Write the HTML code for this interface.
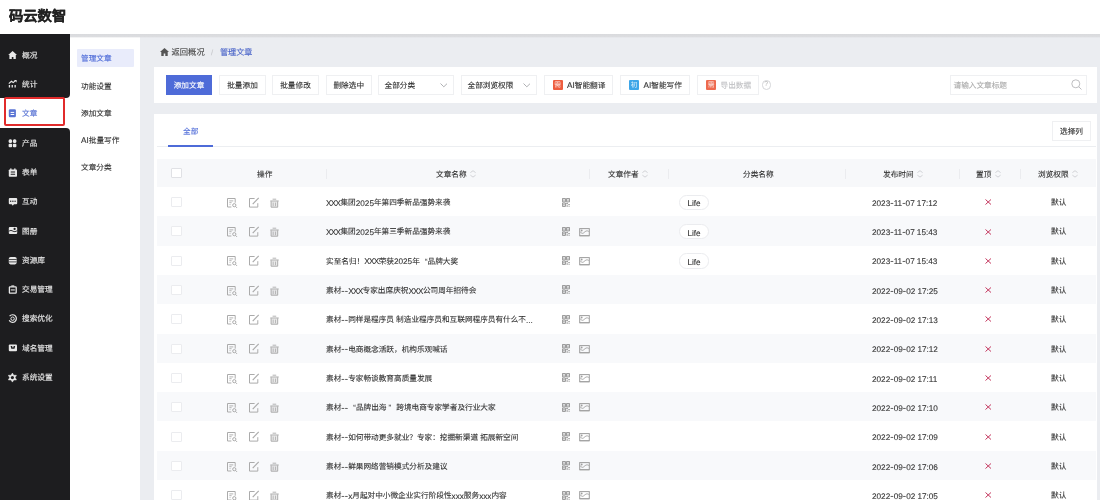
<!DOCTYPE html>
<html lang="zh-CN"><head><meta charset="utf-8"><style>
*{box-sizing:border-box;margin:0;padding:0}
html,body{width:1100px;height:500px;overflow:hidden;background:#fff;font-family:"Liberation Sans",sans-serif;color:#333;text-rendering:geometricPrecision}
#root{position:absolute;left:0;top:0;width:1100px;height:500px;will-change:transform}
.a{position:absolute}
.t{position:absolute;font-size:7.65px;line-height:12px;white-space:nowrap;color:#333;-webkit-text-stroke:0.1px}
.L{font-size:8.2px;position:relative;top:0.7px}
.X{letter-spacing:-0.65px}
.D{font-size:10px;letter-spacing:0.1px}
.Q{display:inline-block;width:5.6px;text-align:right}
.Q2{display:inline-block;width:5.6px;text-align:left}
.btn{position:absolute;height:19.5px;border:1px solid #eff0f2;background:#fff}
.cb{position:absolute;width:11px;height:10px;border:1px solid #e0e1e5;background:#fff;border-radius:1px}
.sep{position:absolute;width:1px;height:10px;background:#ebecef;top:168.5px}
.stripe{position:absolute;left:157px;width:939px;background:#f8f9fb}
.tag{position:absolute;height:15.5px;border:1px solid #ebecef;border-radius:7.5px;background:#fff}
</style></head><body><div id="root">
<div class="a" style="left:0;top:0;width:1100px;height:34px;background:#fff"></div>
<div class="t" style="left:9px;top:7.1px;font-size:14.3px;line-height:20px;font-weight:bold;color:#222;-webkit-text-stroke:0.25px">码云数智</div>
<div class="a" style="left:0;top:34px;width:70px;height:64px;background:#1d1d1f;border-bottom-right-radius:4px"></div>
<div class="a" style="left:0;top:128px;width:70px;height:372px;background:#1d1d1f;border-top-right-radius:4px"></div>
<svg class="a" style="left:8px;top:50.80px" width="10" height="10" viewBox="0 0 10 10" overflow="visible"><path d="M4.6 0.1L0.2 4.1h1.2v3.8h2.4V6.1h1.6v1.8h2.4V4.1H9z" fill="#e8e8e8"/></svg>
<div class="t" style="left:22px;top:50.00px;color:#e4e4e4;-webkit-text-stroke:0.15px">概况</div>
<svg class="a" style="left:8px;top:80.06px" width="10" height="10" viewBox="0 0 10 10" overflow="visible"><path d="M0.8 7.5V5.1h1.3v2.4zM3.6 7.5V5.1h1.3v2.4zM6.5 7.5V5.1h1.3v2.4z" fill="#e8e8e8"/><path d="M0.8 3.6L3.4 1.3 5.2 2.6 7.2 0.9" stroke="#e8e8e8" stroke-width="1.2" fill="none"/><path d="M5.9 -0.1h2.7v2.7z" fill="#e8e8e8"/></svg>
<div class="t" style="left:22px;top:79.26px;color:#e4e4e4;-webkit-text-stroke:0.15px">统计</div>
<svg class="a" style="left:8px;top:109.10px" width="10" height="10" viewBox="0 0 10 10" overflow="visible"><rect x="0.8" y="0.2" width="7.1" height="8.1" rx="1.2" fill="#5a74d4"/><rect x="2.6" y="2.9" width="3.6" height="1" fill="#fff"/><rect x="2.6" y="5" width="3.6" height="1" fill="#fff"/></svg>
<div class="t" style="left:22px;top:108.30px;color:#5a74d4;-webkit-text-stroke:0.15px">文章</div>
<svg class="a" style="left:8px;top:138.58px" width="10" height="10" viewBox="0 0 10 10" overflow="visible"><rect x="0.6" y="0.3" width="3.5" height="3.6" rx="1.5" fill="#e8e8e8"/><rect x="4.9" y="0.3" width="3.5" height="3.6" rx="1.5" fill="#e8e8e8"/><rect x="0.6" y="4.7" width="3.5" height="3.6" rx="1" fill="#e8e8e8"/><rect x="4.9" y="4.7" width="3.5" height="3.6" rx="1" fill="#e8e8e8"/></svg>
<div class="t" style="left:22px;top:137.78px;color:#e4e4e4;-webkit-text-stroke:0.15px">产品</div>
<svg class="a" style="left:8px;top:167.84px" width="10" height="10" viewBox="0 0 10 10" overflow="visible"><rect x="0.8" y="1.4" width="8.2" height="7.3" rx="0.8" fill="#e8e8e8"/><rect x="2.2" y="0.4" width="1.3" height="1.6" fill="#e8e8e8"/><rect x="6.2" y="0.4" width="1.3" height="1.6" fill="#e8e8e8"/><rect x="2.6" y="3.5" width="4.6" height="1" rx="0.4" fill="#1d1d1f"/><rect x="2.6" y="5.7" width="4.6" height="1" rx="0.4" fill="#1d1d1f"/></svg>
<div class="t" style="left:22px;top:167.04px;color:#e4e4e4;-webkit-text-stroke:0.15px">表单</div>
<svg class="a" style="left:8px;top:197.10px" width="10" height="10" viewBox="0 0 10 10" overflow="visible"><rect x="0.8" y="1.1" width="8.4" height="6.2" rx="1" fill="#e8e8e8"/><path d="M3.6 7.1h2.4L4.8 8.8z" fill="#e8e8e8"/><circle cx="2.7" cy="4.2" r="0.7" fill="#1d1d1f"/><circle cx="4.9" cy="4.2" r="0.7" fill="#1d1d1f"/><circle cx="7.1" cy="4.2" r="0.7" fill="#1d1d1f"/></svg>
<div class="t" style="left:22px;top:196.30px;color:#e4e4e4;-webkit-text-stroke:0.15px">互动</div>
<svg class="a" style="left:8px;top:226.36px" width="10" height="10" viewBox="0 0 10 10" overflow="visible"><rect x="0.8" y="0.9" width="8.4" height="7.1" rx="1.1" fill="#e8e8e8"/><circle cx="6.6" cy="2.9" r="1.1" fill="#1d1d1f"/><path d="M0.6 5.6C2.2 3.8 3.8 4.5 5 5.2S7.6 5.8 9.4 4.6" stroke="#1d1d1f" stroke-width="0.9" fill="none"/></svg>
<div class="t" style="left:22px;top:225.56px;color:#e4e4e4;-webkit-text-stroke:0.15px">图册</div>
<svg class="a" style="left:8px;top:255.62px" width="10" height="10" viewBox="0 0 10 10" overflow="visible"><rect x="0.8" y="1" width="7.9" height="7.4" rx="1.8" fill="#e8e8e8"/><path d="M0.8 3.5h7.9M0.8 5.9h7.9" stroke="#1d1d1f" stroke-width="0.75"/></svg>
<div class="t" style="left:22px;top:254.82px;color:#e4e4e4;-webkit-text-stroke:0.15px">资源库</div>
<svg class="a" style="left:8px;top:284.88px" width="10" height="10" viewBox="0 0 10 10" overflow="visible"><rect x="1.4" y="1.9" width="6.8" height="6.2" rx="0.6" stroke="#e8e8e8" stroke-width="1.3" fill="none"/><rect x="3.3" y="0.4" width="3" height="1.2" fill="#e8e8e8"/><rect x="2.8" y="4.4" width="4" height="1.1" fill="#e8e8e8"/></svg>
<div class="t" style="left:22px;top:284.08px;color:#e4e4e4;-webkit-text-stroke:0.15px">交易管理</div>
<svg class="a" style="left:8px;top:314.14px" width="10" height="10" viewBox="0 0 10 10" overflow="visible"><path d="M1.6 2.2A3.8 3.8 0 1 1 1.2 6.3" stroke="#e8e8e8" stroke-width="1.2" fill="none"/><circle cx="4.6" cy="4.7" r="1.7" stroke="#e8e8e8" stroke-width="1" fill="none"/></svg>
<div class="t" style="left:22px;top:313.34px;color:#e4e4e4;-webkit-text-stroke:0.15px">搜索优化</div>
<svg class="a" style="left:8px;top:343.40px" width="10" height="10" viewBox="0 0 10 10" overflow="visible"><rect x="0.8" y="1.4" width="8.2" height="6.9" rx="1" fill="#e8e8e8"/><path d="M2.6 3.1h4.6L6.5 5.8H3.3z" fill="#1d1d1f"/><path d="M4.1 3.1h1.6L5.3 4.6H4.5z" fill="#e8e8e8"/></svg>
<div class="t" style="left:22px;top:342.60px;color:#e4e4e4;-webkit-text-stroke:0.15px">域名管理</div>
<svg class="a" style="left:8px;top:372.66px" width="10" height="10" viewBox="0 0 10 10" overflow="visible"><path d="M4.4 0.1L5.7 2.3 8.4 2.3 7.1 4.6 8.4 6.9 5.7 6.9 4.4 9.1 3.1 6.9 0.4 6.9 1.7 4.6 0.4 2.3 3.1 2.3z" fill="#e8e8e8" stroke="#e8e8e8" stroke-width="0.6" stroke-linejoin="round"/><circle cx="4.4" cy="4.6" r="1.6" fill="#1d1d1f"/></svg>
<div class="t" style="left:22px;top:371.86px;color:#e4e4e4;-webkit-text-stroke:0.15px">系统设置</div>
<div class="a" style="left:4px;top:97px;width:61px;height:28.5px;border:2px solid #e12b2b;border-radius:2px"></div>
<div class="a" style="left:77px;top:48.5px;width:56.5px;height:18px;background:#e9ecfb;border-radius:1px"></div>
<div class="t" style="left:81px;top:53.30px;color:#4e6bd8;">管理文章</div>
<div class="t" style="left:81px;top:80.60px;color:#333;">功能设置</div>
<div class="t" style="left:81px;top:107.70px;color:#333;">添加文章</div>
<div class="t" style="left:81px;top:134.80px;color:#333;"><span class="L">AI</span>批量写作</div>
<div class="t" style="left:81px;top:161.90px;color:#333;">文章分类</div>
<div class="a" style="left:139.6px;top:34px;width:960.4px;height:466px;background:#ebedf1"></div>
<svg class="a" style="left:160px;top:47.5px" width="9" height="8" viewBox="0 0 9 8"><path d="M4.5 0L0 4h1.3v4h2.4V5.6h1.6V8h2.4V4H9z" fill="#555"/></svg>
<div class="t" style="left:171.5px;top:45.60px;color:#444;font-size:8.3px">返回概况</div>
<div class="t" style="left:211px;top:47.00px;color:#c8c9cc;">/</div>
<div class="t" style="left:220px;top:46.90px;color:#4862c8;font-size:8.1px">管理文章</div>
<div class="a" style="left:154px;top:67px;width:943px;height:35.6px;background:#fff"></div>
<div class="a" style="left:166px;top:75px;width:46px;height:19.5px;background:#4e6bd8"></div>
<div class="t" style="left:166.00px;width:46px;text-align:center;top:79.80px;color:#fff;">添加文章</div>
<div class="btn" style="left:219px;top:75px;width:47px"></div>
<div class="t" style="left:219.00px;width:47px;text-align:center;top:79.80px;color:#333;">批量添加</div>
<div class="btn" style="left:272px;top:75px;width:47px"></div>
<div class="t" style="left:272.00px;width:47px;text-align:center;top:79.80px;color:#333;">批量修改</div>
<div class="btn" style="left:325.5px;top:75px;width:46.5px"></div>
<div class="t" style="left:325.50px;width:46.5px;text-align:center;top:79.80px;color:#333;">删除选中</div>
<div class="btn" style="left:378px;top:75px;width:76px"></div>
<div class="t" style="left:384.5px;top:79.80px;color:#333;">全部分类</div>
<svg class="a" style="left:439.80px;top:82.7px" width="8" height="5" viewBox="0 0 8 5"><path d="M0.5 0.5L3.8 3.8 7 0.7" stroke="#a6a7aa" stroke-width="0.9" fill="none"/></svg>
<div class="btn" style="left:461px;top:75px;width:76px"></div>
<div class="t" style="left:467.5px;top:79.80px;color:#333;">全部浏览权限</div>
<svg class="a" style="left:522.80px;top:82.7px" width="8" height="5" viewBox="0 0 8 5"><path d="M0.5 0.5L3.8 3.8 7 0.7" stroke="#a6a7aa" stroke-width="0.9" fill="none"/></svg>
<div class="btn" style="left:543.5px;top:75px;width:69.5px"></div><div class="a" style="left:552.6px;top:80.1px;width:10.2px;height:9.6px;background:#ee5d3f;border-radius:1px"></div><div class="a" style="left:552.6px;top:79.5px;width:10.2px;line-height:11px;font-size:6.8px;color:rgba(255,255,255,.85);text-align:center">需</div>
<div class="t" style="left:567.0px;top:79.80px;color:#333;"><span class="L">AI</span>智能翻译</div>
<div class="btn" style="left:620px;top:75px;width:69.5px"></div><div class="a" style="left:629.1px;top:80.1px;width:10.2px;height:9.6px;background:#3ea6e8;border-radius:1px"></div><div class="a" style="left:629.1px;top:79.5px;width:10.2px;line-height:11px;font-size:6.8px;color:rgba(255,255,255,.85);text-align:center">初</div>
<div class="t" style="left:643.5px;top:79.80px;color:#333;"><span class="L">AI</span>智能写作</div>
<div class="btn" style="left:697px;top:75px;width:61.5px"></div><div class="a" style="left:706.1px;top:80.1px;width:10.2px;height:9.6px;background:#ee6a4f;border-radius:1px"></div><div class="a" style="left:706.1px;top:79.5px;width:10.2px;line-height:11px;font-size:6.8px;color:rgba(255,255,255,.85);text-align:center">需</div>
<div class="t" style="left:720.5px;top:79.80px;color:#c0c1c4;">导出数据</div>
<div class="a" style="left:761.5px;top:80px;width:9.5px;height:9.5px;border:1px solid #d5d6d9;border-radius:50%;font-size:7px;line-height:7.5px;text-align:center;color:#bbb">?</div>
<div class="btn" style="left:949.5px;top:74.5px;width:137px;height:20.5px"></div>
<div class="t" style="left:953.5px;top:80.00px;color:#aaa;">请输入文章标题</div>
<svg class="a" style="left:1071px;top:79px" width="11" height="11" viewBox="0 0 11 11"><circle cx="4.8" cy="4.8" r="4" stroke="#b5b6b9" stroke-width="0.9" fill="none"/><path d="M7.7 7.7L10.5 10.5" stroke="#b5b6b9" stroke-width="0.9"/></svg>
<div class="a" style="left:154px;top:114.2px;width:943px;height:400px;background:#fff"></div>
<div class="t" style="left:183px;top:126.00px;color:#4e6bd8;">全部</div>
<div class="a" style="left:157px;top:146px;width:939px;height:1px;background:#eceef1"></div>
<div class="a" style="left:168px;top:145px;width:45px;height:2px;background:#4e6bd8"></div>
<div class="btn" style="left:1052px;top:121px;width:39px"></div>
<div class="t" style="left:1052.00px;width:39px;text-align:center;top:125.60px;color:#333;">选择列</div>
<div class="a" style="left:157px;top:159px;width:939px;height:28px;background:#f7f8fa"></div>
<div class="cb" style="left:171px;top:168px"></div>
<div class="t" style="left:257px;top:169.00px;color:#333;">操作</div>
<div class="sep" style="left:326px"></div>
<div class="sep" style="left:589px"></div>
<div class="sep" style="left:668px"></div>
<div class="sep" style="left:845px"></div>
<div class="sep" style="left:959px"></div>
<div class="sep" style="left:1019.5px"></div>
<div class="t" style="left:436px;top:169.00px;color:#333;">文章名称</div>
<div class="a" style="left:470.00px;top:170px"><svg class="a" width="6" height="8" viewBox="0 0 6 8"><path d="M0.4 2.6L3 0.7 5.6 2.6M0.4 5.2L3 7.1 5.6 5.2" stroke="#cdced2" stroke-width="0.9" fill="none"/></svg></div>
<div class="t" style="left:608px;top:169.00px;color:#333;">文章作者</div>
<div class="a" style="left:642.00px;top:170px"><svg class="a" width="6" height="8" viewBox="0 0 6 8"><path d="M0.4 2.6L3 0.7 5.6 2.6M0.4 5.2L3 7.1 5.6 5.2" stroke="#cdced2" stroke-width="0.9" fill="none"/></svg></div>
<div class="t" style="left:743px;top:169.00px;color:#333;">分类名称</div>
<div class="t" style="left:883px;top:169.00px;color:#333;">发布时间</div>
<div class="a" style="left:917.00px;top:170px"><svg class="a" width="6" height="8" viewBox="0 0 6 8"><path d="M0.4 2.6L3 0.7 5.6 2.6M0.4 5.2L3 7.1 5.6 5.2" stroke="#cdced2" stroke-width="0.9" fill="none"/></svg></div>
<div class="t" style="left:976px;top:169.00px;color:#333;">置顶</div>
<div class="a" style="left:994.70px;top:170px"><svg class="a" width="6" height="8" viewBox="0 0 6 8"><path d="M0.4 2.6L3 0.7 5.6 2.6M0.4 5.2L3 7.1 5.6 5.2" stroke="#cdced2" stroke-width="0.9" fill="none"/></svg></div>
<div class="t" style="left:1038px;top:169.00px;color:#333;">浏览权限</div>
<div class="a" style="left:1072.00px;top:170px"><svg class="a" width="6" height="8" viewBox="0 0 6 8"><path d="M0.4 2.6L3 0.7 5.6 2.6M0.4 5.2L3 7.1 5.6 5.2" stroke="#cdced2" stroke-width="0.9" fill="none"/></svg></div>
<div class="cb" style="left:171px;top:197.15px;border-color:#ebecef"></div>
<div class="a" style="left:226.6px;top:197.85px"><svg class="a" width="11" height="10" viewBox="0 0 11 10" overflow="visible"><path d="M4.4 9H0.5V0.5h7.7v4.2" stroke="#ababab" stroke-width="1" fill="none"/><path d="M2.3 2.9h4M2.3 4.7h2.3M2.6 6.6h0.9" stroke="#ababab" stroke-width="0.9"/><circle cx="7.3" cy="7.2" r="1.6" stroke="#ababab" stroke-width="1" fill="none"/><path d="M8.5 8.4L10 9.9" stroke="#ababab" stroke-width="1"/></svg></div><div class="a" style="left:248.6px;top:197.85px"><svg class="a" width="10" height="10" viewBox="0 0 10 10" overflow="visible"><path d="M5.6 0.5H0.5v8.6h8.3V5.2" stroke="#ababab" stroke-width="1" fill="none"/><path d="M3.7 6.1L9.7 -0.1" stroke="#ababab" stroke-width="1.2"/></svg></div><div class="a" style="left:269.5px;top:197.95px"><svg class="a" width="10" height="10" viewBox="0 0 10 10"><path d="M0.3 3h8.4" stroke="#ababab" stroke-width="1"/><path d="M2.6 1.2h3.6" stroke="#ababab" stroke-width="0.9"/><path d="M1.1 3.3v5.9h6.6V3.3" stroke="#ababab" stroke-width="1" fill="#ababab" fill-opacity="0.25"/><path d="M3.2 4.6v3.6M5.5 4.6v3.6" stroke="#ababab" stroke-width="0.8"/></svg></div>
<div class="t" style="left:326px;top:197.15px;color:#333;"><span class="L X">XXX</span>集团<span class="L">2025</span>年第四季新品强势来袭</div>
<div class="a" style="left:562px;top:197.55px"><svg class="a" width="8" height="9" viewBox="0 0 8 9"><path d="M0.45 0.45h3v3.4h-3zM4.55 0.45h3v3.4h-3zM0.45 5.05h3v3.4h-3z" stroke="#8c8c8c" stroke-width="0.9" fill="none"/><path d="M1.4 1.5h1.1v1.3H1.4zM5.5 1.5h1.1v1.3H5.5zM1.4 6.1h1.1v1.3H1.4z" fill="#8c8c8c"/><path d="M4.3 4.8h1.5v1.5H4.3zM6.4 6h1.3v1.2H6.4zM4.6 7.3h1.1v1.4H4.6zM6.6 7.9h1v0.9h-1z" fill="#8c8c8c"/></svg></div><div class="tag" style="left:679px;top:194.65px;width:29.5px"></div><div class="t" style="left:679.25px;width:29.5px;text-align:center;top:197.65px;color:#333;"><span class="L">Life</span></div>
<div class="t" style="left:872px;top:197.15px;color:#333;"><span class="L">2023</span><span class="L D">-</span><span class="L">11</span><span class="L D">-</span><span class="L">07</span> <span class="L">17:12</span></div>
<svg class="a" style="left:985px;top:199.25px" width="6.5" height="6" viewBox="0 0 6.5 6"><path d="M0.5 0.5L6 5.5M6 0.5L0.5 5.5" stroke="#c4375f" stroke-width="1"/></svg><div class="t" style="left:1051px;top:197.15px;color:#333;">默认</div>
<div class="stripe" style="top:216.30px;height:29.3px"></div>
<div class="cb" style="left:171px;top:226.45px;border-color:#ebecef"></div>
<div class="a" style="left:226.6px;top:227.15px"><svg class="a" width="11" height="10" viewBox="0 0 11 10" overflow="visible"><path d="M4.4 9H0.5V0.5h7.7v4.2" stroke="#ababab" stroke-width="1" fill="none"/><path d="M2.3 2.9h4M2.3 4.7h2.3M2.6 6.6h0.9" stroke="#ababab" stroke-width="0.9"/><circle cx="7.3" cy="7.2" r="1.6" stroke="#ababab" stroke-width="1" fill="none"/><path d="M8.5 8.4L10 9.9" stroke="#ababab" stroke-width="1"/></svg></div><div class="a" style="left:248.6px;top:227.15px"><svg class="a" width="10" height="10" viewBox="0 0 10 10" overflow="visible"><path d="M5.6 0.5H0.5v8.6h8.3V5.2" stroke="#ababab" stroke-width="1" fill="none"/><path d="M3.7 6.1L9.7 -0.1" stroke="#ababab" stroke-width="1.2"/></svg></div><div class="a" style="left:269.5px;top:227.25px"><svg class="a" width="10" height="10" viewBox="0 0 10 10"><path d="M0.3 3h8.4" stroke="#ababab" stroke-width="1"/><path d="M2.6 1.2h3.6" stroke="#ababab" stroke-width="0.9"/><path d="M1.1 3.3v5.9h6.6V3.3" stroke="#ababab" stroke-width="1" fill="#ababab" fill-opacity="0.25"/><path d="M3.2 4.6v3.6M5.5 4.6v3.6" stroke="#ababab" stroke-width="0.8"/></svg></div>
<div class="t" style="left:326px;top:226.45px;color:#333;"><span class="L X">XXX</span>集团<span class="L">2025</span>年第三季新品强势来袭</div>
<div class="a" style="left:562px;top:226.85px"><svg class="a" width="8" height="9" viewBox="0 0 8 9"><path d="M0.45 0.45h3v3.4h-3zM4.55 0.45h3v3.4h-3zM0.45 5.05h3v3.4h-3z" stroke="#8c8c8c" stroke-width="0.9" fill="none"/><path d="M1.4 1.5h1.1v1.3H1.4zM5.5 1.5h1.1v1.3H5.5zM1.4 6.1h1.1v1.3H1.4z" fill="#8c8c8c"/><path d="M4.3 4.8h1.5v1.5H4.3zM6.4 6h1.3v1.2H6.4zM4.6 7.3h1.1v1.4H4.6zM6.6 7.9h1v0.9h-1z" fill="#8c8c8c"/></svg></div><div class="a" style="left:578.8px;top:227.55px"><svg class="a" width="11" height="9" viewBox="0 0 11 9"><rect x="0.7" y="0.6" width="9.6" height="7.1" stroke="#9d9d9d" stroke-width="1" fill="none"/><path d="M0.7 7.8h9.6" stroke="#9d9d9d" stroke-width="0.8"/><path d="M1.2 3.6C2.6 6 3.9 5.6 5.2 4.4S7.8 2.2 9.8 3.4" stroke="#9d9d9d" stroke-width="0.9" fill="none"/><circle cx="2.7" cy="2.5" r="0.9" fill="#9d9d9d"/></svg></div><div class="tag" style="left:679px;top:223.95px;width:29.5px"></div><div class="t" style="left:679.25px;width:29.5px;text-align:center;top:226.95px;color:#333;"><span class="L">Life</span></div>
<div class="t" style="left:872px;top:226.45px;color:#333;"><span class="L">2023</span><span class="L D">-</span><span class="L">11</span><span class="L D">-</span><span class="L">07</span> <span class="L">15:43</span></div>
<svg class="a" style="left:985px;top:228.55px" width="6.5" height="6" viewBox="0 0 6.5 6"><path d="M0.5 0.5L6 5.5M6 0.5L0.5 5.5" stroke="#c4375f" stroke-width="1"/></svg><div class="t" style="left:1051px;top:226.45px;color:#333;">默认</div>
<div class="cb" style="left:171px;top:255.75px;border-color:#ebecef"></div>
<div class="a" style="left:226.6px;top:256.45px"><svg class="a" width="11" height="10" viewBox="0 0 11 10" overflow="visible"><path d="M4.4 9H0.5V0.5h7.7v4.2" stroke="#ababab" stroke-width="1" fill="none"/><path d="M2.3 2.9h4M2.3 4.7h2.3M2.6 6.6h0.9" stroke="#ababab" stroke-width="0.9"/><circle cx="7.3" cy="7.2" r="1.6" stroke="#ababab" stroke-width="1" fill="none"/><path d="M8.5 8.4L10 9.9" stroke="#ababab" stroke-width="1"/></svg></div><div class="a" style="left:248.6px;top:256.45px"><svg class="a" width="10" height="10" viewBox="0 0 10 10" overflow="visible"><path d="M5.6 0.5H0.5v8.6h8.3V5.2" stroke="#ababab" stroke-width="1" fill="none"/><path d="M3.7 6.1L9.7 -0.1" stroke="#ababab" stroke-width="1.2"/></svg></div><div class="a" style="left:269.5px;top:256.55px"><svg class="a" width="10" height="10" viewBox="0 0 10 10"><path d="M0.3 3h8.4" stroke="#ababab" stroke-width="1"/><path d="M2.6 1.2h3.6" stroke="#ababab" stroke-width="0.9"/><path d="M1.1 3.3v5.9h6.6V3.3" stroke="#ababab" stroke-width="1" fill="#ababab" fill-opacity="0.25"/><path d="M3.2 4.6v3.6M5.5 4.6v3.6" stroke="#ababab" stroke-width="0.8"/></svg></div>
<div class="t" style="left:326px;top:255.75px;color:#333;">实至名归！<span class="L X">XXX</span>荣获<span class="L">2025</span>年 <span class="Q">“</span>品牌大奖</div>
<div class="a" style="left:562px;top:256.15px"><svg class="a" width="8" height="9" viewBox="0 0 8 9"><path d="M0.45 0.45h3v3.4h-3zM4.55 0.45h3v3.4h-3zM0.45 5.05h3v3.4h-3z" stroke="#8c8c8c" stroke-width="0.9" fill="none"/><path d="M1.4 1.5h1.1v1.3H1.4zM5.5 1.5h1.1v1.3H5.5zM1.4 6.1h1.1v1.3H1.4z" fill="#8c8c8c"/><path d="M4.3 4.8h1.5v1.5H4.3zM6.4 6h1.3v1.2H6.4zM4.6 7.3h1.1v1.4H4.6zM6.6 7.9h1v0.9h-1z" fill="#8c8c8c"/></svg></div><div class="a" style="left:578.8px;top:256.85px"><svg class="a" width="11" height="9" viewBox="0 0 11 9"><rect x="0.7" y="0.6" width="9.6" height="7.1" stroke="#9d9d9d" stroke-width="1" fill="none"/><path d="M0.7 7.8h9.6" stroke="#9d9d9d" stroke-width="0.8"/><path d="M1.2 3.6C2.6 6 3.9 5.6 5.2 4.4S7.8 2.2 9.8 3.4" stroke="#9d9d9d" stroke-width="0.9" fill="none"/><circle cx="2.7" cy="2.5" r="0.9" fill="#9d9d9d"/></svg></div><div class="tag" style="left:679px;top:253.25px;width:29.5px"></div><div class="t" style="left:679.25px;width:29.5px;text-align:center;top:256.25px;color:#333;"><span class="L">Life</span></div>
<div class="t" style="left:872px;top:255.75px;color:#333;"><span class="L">2023</span><span class="L D">-</span><span class="L">11</span><span class="L D">-</span><span class="L">07</span> <span class="L">15:43</span></div>
<svg class="a" style="left:985px;top:257.85px" width="6.5" height="6" viewBox="0 0 6.5 6"><path d="M0.5 0.5L6 5.5M6 0.5L0.5 5.5" stroke="#c4375f" stroke-width="1"/></svg><div class="t" style="left:1051px;top:255.75px;color:#333;">默认</div>
<div class="stripe" style="top:274.90px;height:29.3px"></div>
<div class="cb" style="left:171px;top:285.05px;border-color:#ebecef"></div>
<div class="a" style="left:226.6px;top:285.75px"><svg class="a" width="11" height="10" viewBox="0 0 11 10" overflow="visible"><path d="M4.4 9H0.5V0.5h7.7v4.2" stroke="#ababab" stroke-width="1" fill="none"/><path d="M2.3 2.9h4M2.3 4.7h2.3M2.6 6.6h0.9" stroke="#ababab" stroke-width="0.9"/><circle cx="7.3" cy="7.2" r="1.6" stroke="#ababab" stroke-width="1" fill="none"/><path d="M8.5 8.4L10 9.9" stroke="#ababab" stroke-width="1"/></svg></div><div class="a" style="left:248.6px;top:285.75px"><svg class="a" width="10" height="10" viewBox="0 0 10 10" overflow="visible"><path d="M5.6 0.5H0.5v8.6h8.3V5.2" stroke="#ababab" stroke-width="1" fill="none"/><path d="M3.7 6.1L9.7 -0.1" stroke="#ababab" stroke-width="1.2"/></svg></div><div class="a" style="left:269.5px;top:285.85px"><svg class="a" width="10" height="10" viewBox="0 0 10 10"><path d="M0.3 3h8.4" stroke="#ababab" stroke-width="1"/><path d="M2.6 1.2h3.6" stroke="#ababab" stroke-width="0.9"/><path d="M1.1 3.3v5.9h6.6V3.3" stroke="#ababab" stroke-width="1" fill="#ababab" fill-opacity="0.25"/><path d="M3.2 4.6v3.6M5.5 4.6v3.6" stroke="#ababab" stroke-width="0.8"/></svg></div>
<div class="t" style="left:326px;top:285.05px;color:#333;">素材<span class="L D">--</span><span class="L X">XXX</span>专家出席庆祝<span class="L X">XXX</span>公司周年招待会</div>
<div class="a" style="left:562px;top:285.45px"><svg class="a" width="8" height="9" viewBox="0 0 8 9"><path d="M0.45 0.45h3v3.4h-3zM4.55 0.45h3v3.4h-3zM0.45 5.05h3v3.4h-3z" stroke="#8c8c8c" stroke-width="0.9" fill="none"/><path d="M1.4 1.5h1.1v1.3H1.4zM5.5 1.5h1.1v1.3H5.5zM1.4 6.1h1.1v1.3H1.4z" fill="#8c8c8c"/><path d="M4.3 4.8h1.5v1.5H4.3zM6.4 6h1.3v1.2H6.4zM4.6 7.3h1.1v1.4H4.6zM6.6 7.9h1v0.9h-1z" fill="#8c8c8c"/></svg></div><div class="t" style="left:872px;top:285.05px;color:#333;"><span class="L">2022</span><span class="L D">-</span><span class="L">09</span><span class="L D">-</span><span class="L">02</span> <span class="L">17:25</span></div>
<svg class="a" style="left:985px;top:287.15px" width="6.5" height="6" viewBox="0 0 6.5 6"><path d="M0.5 0.5L6 5.5M6 0.5L0.5 5.5" stroke="#c4375f" stroke-width="1"/></svg><div class="t" style="left:1051px;top:285.05px;color:#333;">默认</div>
<div class="cb" style="left:171px;top:314.35px;border-color:#ebecef"></div>
<div class="a" style="left:226.6px;top:315.05px"><svg class="a" width="11" height="10" viewBox="0 0 11 10" overflow="visible"><path d="M4.4 9H0.5V0.5h7.7v4.2" stroke="#ababab" stroke-width="1" fill="none"/><path d="M2.3 2.9h4M2.3 4.7h2.3M2.6 6.6h0.9" stroke="#ababab" stroke-width="0.9"/><circle cx="7.3" cy="7.2" r="1.6" stroke="#ababab" stroke-width="1" fill="none"/><path d="M8.5 8.4L10 9.9" stroke="#ababab" stroke-width="1"/></svg></div><div class="a" style="left:248.6px;top:315.05px"><svg class="a" width="10" height="10" viewBox="0 0 10 10" overflow="visible"><path d="M5.6 0.5H0.5v8.6h8.3V5.2" stroke="#ababab" stroke-width="1" fill="none"/><path d="M3.7 6.1L9.7 -0.1" stroke="#ababab" stroke-width="1.2"/></svg></div><div class="a" style="left:269.5px;top:315.15px"><svg class="a" width="10" height="10" viewBox="0 0 10 10"><path d="M0.3 3h8.4" stroke="#ababab" stroke-width="1"/><path d="M2.6 1.2h3.6" stroke="#ababab" stroke-width="0.9"/><path d="M1.1 3.3v5.9h6.6V3.3" stroke="#ababab" stroke-width="1" fill="#ababab" fill-opacity="0.25"/><path d="M3.2 4.6v3.6M5.5 4.6v3.6" stroke="#ababab" stroke-width="0.8"/></svg></div>
<div class="t" style="left:326px;top:314.35px;color:#333;">素材<span class="L D">--</span>同样是程序员 制造业程序员和互联网程序员有什么不<span class="L">...</span></div>
<div class="a" style="left:562px;top:314.75px"><svg class="a" width="8" height="9" viewBox="0 0 8 9"><path d="M0.45 0.45h3v3.4h-3zM4.55 0.45h3v3.4h-3zM0.45 5.05h3v3.4h-3z" stroke="#8c8c8c" stroke-width="0.9" fill="none"/><path d="M1.4 1.5h1.1v1.3H1.4zM5.5 1.5h1.1v1.3H5.5zM1.4 6.1h1.1v1.3H1.4z" fill="#8c8c8c"/><path d="M4.3 4.8h1.5v1.5H4.3zM6.4 6h1.3v1.2H6.4zM4.6 7.3h1.1v1.4H4.6zM6.6 7.9h1v0.9h-1z" fill="#8c8c8c"/></svg></div><div class="a" style="left:578.8px;top:315.45px"><svg class="a" width="11" height="9" viewBox="0 0 11 9"><rect x="0.7" y="0.6" width="9.6" height="7.1" stroke="#9d9d9d" stroke-width="1" fill="none"/><path d="M0.7 7.8h9.6" stroke="#9d9d9d" stroke-width="0.8"/><path d="M1.2 3.6C2.6 6 3.9 5.6 5.2 4.4S7.8 2.2 9.8 3.4" stroke="#9d9d9d" stroke-width="0.9" fill="none"/><circle cx="2.7" cy="2.5" r="0.9" fill="#9d9d9d"/></svg></div><div class="t" style="left:872px;top:314.35px;color:#333;"><span class="L">2022</span><span class="L D">-</span><span class="L">09</span><span class="L D">-</span><span class="L">02</span> <span class="L">17:13</span></div>
<svg class="a" style="left:985px;top:316.45px" width="6.5" height="6" viewBox="0 0 6.5 6"><path d="M0.5 0.5L6 5.5M6 0.5L0.5 5.5" stroke="#c4375f" stroke-width="1"/></svg><div class="t" style="left:1051px;top:314.35px;color:#333;">默认</div>
<div class="stripe" style="top:333.50px;height:29.3px"></div>
<div class="cb" style="left:171px;top:343.65px;border-color:#ebecef"></div>
<div class="a" style="left:226.6px;top:344.35px"><svg class="a" width="11" height="10" viewBox="0 0 11 10" overflow="visible"><path d="M4.4 9H0.5V0.5h7.7v4.2" stroke="#ababab" stroke-width="1" fill="none"/><path d="M2.3 2.9h4M2.3 4.7h2.3M2.6 6.6h0.9" stroke="#ababab" stroke-width="0.9"/><circle cx="7.3" cy="7.2" r="1.6" stroke="#ababab" stroke-width="1" fill="none"/><path d="M8.5 8.4L10 9.9" stroke="#ababab" stroke-width="1"/></svg></div><div class="a" style="left:248.6px;top:344.35px"><svg class="a" width="10" height="10" viewBox="0 0 10 10" overflow="visible"><path d="M5.6 0.5H0.5v8.6h8.3V5.2" stroke="#ababab" stroke-width="1" fill="none"/><path d="M3.7 6.1L9.7 -0.1" stroke="#ababab" stroke-width="1.2"/></svg></div><div class="a" style="left:269.5px;top:344.45px"><svg class="a" width="10" height="10" viewBox="0 0 10 10"><path d="M0.3 3h8.4" stroke="#ababab" stroke-width="1"/><path d="M2.6 1.2h3.6" stroke="#ababab" stroke-width="0.9"/><path d="M1.1 3.3v5.9h6.6V3.3" stroke="#ababab" stroke-width="1" fill="#ababab" fill-opacity="0.25"/><path d="M3.2 4.6v3.6M5.5 4.6v3.6" stroke="#ababab" stroke-width="0.8"/></svg></div>
<div class="t" style="left:326px;top:343.65px;color:#333;">素材<span class="L D">--</span>电商概念活跃，机构乐观喊话</div>
<div class="a" style="left:562px;top:344.05px"><svg class="a" width="8" height="9" viewBox="0 0 8 9"><path d="M0.45 0.45h3v3.4h-3zM4.55 0.45h3v3.4h-3zM0.45 5.05h3v3.4h-3z" stroke="#8c8c8c" stroke-width="0.9" fill="none"/><path d="M1.4 1.5h1.1v1.3H1.4zM5.5 1.5h1.1v1.3H5.5zM1.4 6.1h1.1v1.3H1.4z" fill="#8c8c8c"/><path d="M4.3 4.8h1.5v1.5H4.3zM6.4 6h1.3v1.2H6.4zM4.6 7.3h1.1v1.4H4.6zM6.6 7.9h1v0.9h-1z" fill="#8c8c8c"/></svg></div><div class="a" style="left:578.8px;top:344.75px"><svg class="a" width="11" height="9" viewBox="0 0 11 9"><rect x="0.7" y="0.6" width="9.6" height="7.1" stroke="#9d9d9d" stroke-width="1" fill="none"/><path d="M0.7 7.8h9.6" stroke="#9d9d9d" stroke-width="0.8"/><path d="M1.2 3.6C2.6 6 3.9 5.6 5.2 4.4S7.8 2.2 9.8 3.4" stroke="#9d9d9d" stroke-width="0.9" fill="none"/><circle cx="2.7" cy="2.5" r="0.9" fill="#9d9d9d"/></svg></div><div class="t" style="left:872px;top:343.65px;color:#333;"><span class="L">2022</span><span class="L D">-</span><span class="L">09</span><span class="L D">-</span><span class="L">02</span> <span class="L">17:12</span></div>
<svg class="a" style="left:985px;top:345.75px" width="6.5" height="6" viewBox="0 0 6.5 6"><path d="M0.5 0.5L6 5.5M6 0.5L0.5 5.5" stroke="#c4375f" stroke-width="1"/></svg><div class="t" style="left:1051px;top:343.65px;color:#333;">默认</div>
<div class="cb" style="left:171px;top:372.95px;border-color:#ebecef"></div>
<div class="a" style="left:226.6px;top:373.65px"><svg class="a" width="11" height="10" viewBox="0 0 11 10" overflow="visible"><path d="M4.4 9H0.5V0.5h7.7v4.2" stroke="#ababab" stroke-width="1" fill="none"/><path d="M2.3 2.9h4M2.3 4.7h2.3M2.6 6.6h0.9" stroke="#ababab" stroke-width="0.9"/><circle cx="7.3" cy="7.2" r="1.6" stroke="#ababab" stroke-width="1" fill="none"/><path d="M8.5 8.4L10 9.9" stroke="#ababab" stroke-width="1"/></svg></div><div class="a" style="left:248.6px;top:373.65px"><svg class="a" width="10" height="10" viewBox="0 0 10 10" overflow="visible"><path d="M5.6 0.5H0.5v8.6h8.3V5.2" stroke="#ababab" stroke-width="1" fill="none"/><path d="M3.7 6.1L9.7 -0.1" stroke="#ababab" stroke-width="1.2"/></svg></div><div class="a" style="left:269.5px;top:373.75px"><svg class="a" width="10" height="10" viewBox="0 0 10 10"><path d="M0.3 3h8.4" stroke="#ababab" stroke-width="1"/><path d="M2.6 1.2h3.6" stroke="#ababab" stroke-width="0.9"/><path d="M1.1 3.3v5.9h6.6V3.3" stroke="#ababab" stroke-width="1" fill="#ababab" fill-opacity="0.25"/><path d="M3.2 4.6v3.6M5.5 4.6v3.6" stroke="#ababab" stroke-width="0.8"/></svg></div>
<div class="t" style="left:326px;top:372.95px;color:#333;">素材<span class="L D">--</span>专家畅谈教育高质量发展</div>
<div class="a" style="left:562px;top:373.35px"><svg class="a" width="8" height="9" viewBox="0 0 8 9"><path d="M0.45 0.45h3v3.4h-3zM4.55 0.45h3v3.4h-3zM0.45 5.05h3v3.4h-3z" stroke="#8c8c8c" stroke-width="0.9" fill="none"/><path d="M1.4 1.5h1.1v1.3H1.4zM5.5 1.5h1.1v1.3H5.5zM1.4 6.1h1.1v1.3H1.4z" fill="#8c8c8c"/><path d="M4.3 4.8h1.5v1.5H4.3zM6.4 6h1.3v1.2H6.4zM4.6 7.3h1.1v1.4H4.6zM6.6 7.9h1v0.9h-1z" fill="#8c8c8c"/></svg></div><div class="a" style="left:578.8px;top:374.05px"><svg class="a" width="11" height="9" viewBox="0 0 11 9"><rect x="0.7" y="0.6" width="9.6" height="7.1" stroke="#9d9d9d" stroke-width="1" fill="none"/><path d="M0.7 7.8h9.6" stroke="#9d9d9d" stroke-width="0.8"/><path d="M1.2 3.6C2.6 6 3.9 5.6 5.2 4.4S7.8 2.2 9.8 3.4" stroke="#9d9d9d" stroke-width="0.9" fill="none"/><circle cx="2.7" cy="2.5" r="0.9" fill="#9d9d9d"/></svg></div><div class="t" style="left:872px;top:372.95px;color:#333;"><span class="L">2022</span><span class="L D">-</span><span class="L">09</span><span class="L D">-</span><span class="L">02</span> <span class="L">17:11</span></div>
<svg class="a" style="left:985px;top:375.05px" width="6.5" height="6" viewBox="0 0 6.5 6"><path d="M0.5 0.5L6 5.5M6 0.5L0.5 5.5" stroke="#c4375f" stroke-width="1"/></svg><div class="t" style="left:1051px;top:372.95px;color:#333;">默认</div>
<div class="stripe" style="top:392.10px;height:29.3px"></div>
<div class="cb" style="left:171px;top:402.25px;border-color:#ebecef"></div>
<div class="a" style="left:226.6px;top:402.95px"><svg class="a" width="11" height="10" viewBox="0 0 11 10" overflow="visible"><path d="M4.4 9H0.5V0.5h7.7v4.2" stroke="#ababab" stroke-width="1" fill="none"/><path d="M2.3 2.9h4M2.3 4.7h2.3M2.6 6.6h0.9" stroke="#ababab" stroke-width="0.9"/><circle cx="7.3" cy="7.2" r="1.6" stroke="#ababab" stroke-width="1" fill="none"/><path d="M8.5 8.4L10 9.9" stroke="#ababab" stroke-width="1"/></svg></div><div class="a" style="left:248.6px;top:402.95px"><svg class="a" width="10" height="10" viewBox="0 0 10 10" overflow="visible"><path d="M5.6 0.5H0.5v8.6h8.3V5.2" stroke="#ababab" stroke-width="1" fill="none"/><path d="M3.7 6.1L9.7 -0.1" stroke="#ababab" stroke-width="1.2"/></svg></div><div class="a" style="left:269.5px;top:403.05px"><svg class="a" width="10" height="10" viewBox="0 0 10 10"><path d="M0.3 3h8.4" stroke="#ababab" stroke-width="1"/><path d="M2.6 1.2h3.6" stroke="#ababab" stroke-width="0.9"/><path d="M1.1 3.3v5.9h6.6V3.3" stroke="#ababab" stroke-width="1" fill="#ababab" fill-opacity="0.25"/><path d="M3.2 4.6v3.6M5.5 4.6v3.6" stroke="#ababab" stroke-width="0.8"/></svg></div>
<div class="t" style="left:326px;top:402.25px;color:#333;">素材<span class="L D">--</span> <span class="Q">“</span>品牌出海 <span class="Q2">”</span> 跨境电商专家学者及行业大家</div>
<div class="a" style="left:562px;top:402.65px"><svg class="a" width="8" height="9" viewBox="0 0 8 9"><path d="M0.45 0.45h3v3.4h-3zM4.55 0.45h3v3.4h-3zM0.45 5.05h3v3.4h-3z" stroke="#8c8c8c" stroke-width="0.9" fill="none"/><path d="M1.4 1.5h1.1v1.3H1.4zM5.5 1.5h1.1v1.3H5.5zM1.4 6.1h1.1v1.3H1.4z" fill="#8c8c8c"/><path d="M4.3 4.8h1.5v1.5H4.3zM6.4 6h1.3v1.2H6.4zM4.6 7.3h1.1v1.4H4.6zM6.6 7.9h1v0.9h-1z" fill="#8c8c8c"/></svg></div><div class="a" style="left:578.8px;top:403.35px"><svg class="a" width="11" height="9" viewBox="0 0 11 9"><rect x="0.7" y="0.6" width="9.6" height="7.1" stroke="#9d9d9d" stroke-width="1" fill="none"/><path d="M0.7 7.8h9.6" stroke="#9d9d9d" stroke-width="0.8"/><path d="M1.2 3.6C2.6 6 3.9 5.6 5.2 4.4S7.8 2.2 9.8 3.4" stroke="#9d9d9d" stroke-width="0.9" fill="none"/><circle cx="2.7" cy="2.5" r="0.9" fill="#9d9d9d"/></svg></div><div class="t" style="left:872px;top:402.25px;color:#333;"><span class="L">2022</span><span class="L D">-</span><span class="L">09</span><span class="L D">-</span><span class="L">02</span> <span class="L">17:10</span></div>
<svg class="a" style="left:985px;top:404.35px" width="6.5" height="6" viewBox="0 0 6.5 6"><path d="M0.5 0.5L6 5.5M6 0.5L0.5 5.5" stroke="#c4375f" stroke-width="1"/></svg><div class="t" style="left:1051px;top:402.25px;color:#333;">默认</div>
<div class="cb" style="left:171px;top:431.55px;border-color:#ebecef"></div>
<div class="a" style="left:226.6px;top:432.25px"><svg class="a" width="11" height="10" viewBox="0 0 11 10" overflow="visible"><path d="M4.4 9H0.5V0.5h7.7v4.2" stroke="#ababab" stroke-width="1" fill="none"/><path d="M2.3 2.9h4M2.3 4.7h2.3M2.6 6.6h0.9" stroke="#ababab" stroke-width="0.9"/><circle cx="7.3" cy="7.2" r="1.6" stroke="#ababab" stroke-width="1" fill="none"/><path d="M8.5 8.4L10 9.9" stroke="#ababab" stroke-width="1"/></svg></div><div class="a" style="left:248.6px;top:432.25px"><svg class="a" width="10" height="10" viewBox="0 0 10 10" overflow="visible"><path d="M5.6 0.5H0.5v8.6h8.3V5.2" stroke="#ababab" stroke-width="1" fill="none"/><path d="M3.7 6.1L9.7 -0.1" stroke="#ababab" stroke-width="1.2"/></svg></div><div class="a" style="left:269.5px;top:432.35px"><svg class="a" width="10" height="10" viewBox="0 0 10 10"><path d="M0.3 3h8.4" stroke="#ababab" stroke-width="1"/><path d="M2.6 1.2h3.6" stroke="#ababab" stroke-width="0.9"/><path d="M1.1 3.3v5.9h6.6V3.3" stroke="#ababab" stroke-width="1" fill="#ababab" fill-opacity="0.25"/><path d="M3.2 4.6v3.6M5.5 4.6v3.6" stroke="#ababab" stroke-width="0.8"/></svg></div>
<div class="t" style="left:326px;top:431.55px;color:#333;">素材<span class="L D">--</span>如何带动更多就业？专家：挖掘新渠道 拓展新空间</div>
<div class="a" style="left:562px;top:431.95px"><svg class="a" width="8" height="9" viewBox="0 0 8 9"><path d="M0.45 0.45h3v3.4h-3zM4.55 0.45h3v3.4h-3zM0.45 5.05h3v3.4h-3z" stroke="#8c8c8c" stroke-width="0.9" fill="none"/><path d="M1.4 1.5h1.1v1.3H1.4zM5.5 1.5h1.1v1.3H5.5zM1.4 6.1h1.1v1.3H1.4z" fill="#8c8c8c"/><path d="M4.3 4.8h1.5v1.5H4.3zM6.4 6h1.3v1.2H6.4zM4.6 7.3h1.1v1.4H4.6zM6.6 7.9h1v0.9h-1z" fill="#8c8c8c"/></svg></div><div class="a" style="left:578.8px;top:432.65px"><svg class="a" width="11" height="9" viewBox="0 0 11 9"><rect x="0.7" y="0.6" width="9.6" height="7.1" stroke="#9d9d9d" stroke-width="1" fill="none"/><path d="M0.7 7.8h9.6" stroke="#9d9d9d" stroke-width="0.8"/><path d="M1.2 3.6C2.6 6 3.9 5.6 5.2 4.4S7.8 2.2 9.8 3.4" stroke="#9d9d9d" stroke-width="0.9" fill="none"/><circle cx="2.7" cy="2.5" r="0.9" fill="#9d9d9d"/></svg></div><div class="t" style="left:872px;top:431.55px;color:#333;"><span class="L">2022</span><span class="L D">-</span><span class="L">09</span><span class="L D">-</span><span class="L">02</span> <span class="L">17:09</span></div>
<svg class="a" style="left:985px;top:433.65px" width="6.5" height="6" viewBox="0 0 6.5 6"><path d="M0.5 0.5L6 5.5M6 0.5L0.5 5.5" stroke="#c4375f" stroke-width="1"/></svg><div class="t" style="left:1051px;top:431.55px;color:#333;">默认</div>
<div class="stripe" style="top:450.70px;height:29.3px"></div>
<div class="cb" style="left:171px;top:460.85px;border-color:#ebecef"></div>
<div class="a" style="left:226.6px;top:461.55px"><svg class="a" width="11" height="10" viewBox="0 0 11 10" overflow="visible"><path d="M4.4 9H0.5V0.5h7.7v4.2" stroke="#ababab" stroke-width="1" fill="none"/><path d="M2.3 2.9h4M2.3 4.7h2.3M2.6 6.6h0.9" stroke="#ababab" stroke-width="0.9"/><circle cx="7.3" cy="7.2" r="1.6" stroke="#ababab" stroke-width="1" fill="none"/><path d="M8.5 8.4L10 9.9" stroke="#ababab" stroke-width="1"/></svg></div><div class="a" style="left:248.6px;top:461.55px"><svg class="a" width="10" height="10" viewBox="0 0 10 10" overflow="visible"><path d="M5.6 0.5H0.5v8.6h8.3V5.2" stroke="#ababab" stroke-width="1" fill="none"/><path d="M3.7 6.1L9.7 -0.1" stroke="#ababab" stroke-width="1.2"/></svg></div><div class="a" style="left:269.5px;top:461.65px"><svg class="a" width="10" height="10" viewBox="0 0 10 10"><path d="M0.3 3h8.4" stroke="#ababab" stroke-width="1"/><path d="M2.6 1.2h3.6" stroke="#ababab" stroke-width="0.9"/><path d="M1.1 3.3v5.9h6.6V3.3" stroke="#ababab" stroke-width="1" fill="#ababab" fill-opacity="0.25"/><path d="M3.2 4.6v3.6M5.5 4.6v3.6" stroke="#ababab" stroke-width="0.8"/></svg></div>
<div class="t" style="left:326px;top:460.85px;color:#333;">素材<span class="L D">--</span>鲜果网络营销模式分析及建议</div>
<div class="a" style="left:562px;top:461.25px"><svg class="a" width="8" height="9" viewBox="0 0 8 9"><path d="M0.45 0.45h3v3.4h-3zM4.55 0.45h3v3.4h-3zM0.45 5.05h3v3.4h-3z" stroke="#8c8c8c" stroke-width="0.9" fill="none"/><path d="M1.4 1.5h1.1v1.3H1.4zM5.5 1.5h1.1v1.3H5.5zM1.4 6.1h1.1v1.3H1.4z" fill="#8c8c8c"/><path d="M4.3 4.8h1.5v1.5H4.3zM6.4 6h1.3v1.2H6.4zM4.6 7.3h1.1v1.4H4.6zM6.6 7.9h1v0.9h-1z" fill="#8c8c8c"/></svg></div><div class="a" style="left:578.8px;top:461.95px"><svg class="a" width="11" height="9" viewBox="0 0 11 9"><rect x="0.7" y="0.6" width="9.6" height="7.1" stroke="#9d9d9d" stroke-width="1" fill="none"/><path d="M0.7 7.8h9.6" stroke="#9d9d9d" stroke-width="0.8"/><path d="M1.2 3.6C2.6 6 3.9 5.6 5.2 4.4S7.8 2.2 9.8 3.4" stroke="#9d9d9d" stroke-width="0.9" fill="none"/><circle cx="2.7" cy="2.5" r="0.9" fill="#9d9d9d"/></svg></div><div class="t" style="left:872px;top:460.85px;color:#333;"><span class="L">2022</span><span class="L D">-</span><span class="L">09</span><span class="L D">-</span><span class="L">02</span> <span class="L">17:06</span></div>
<svg class="a" style="left:985px;top:462.95px" width="6.5" height="6" viewBox="0 0 6.5 6"><path d="M0.5 0.5L6 5.5M6 0.5L0.5 5.5" stroke="#c4375f" stroke-width="1"/></svg><div class="t" style="left:1051px;top:460.85px;color:#333;">默认</div>
<div class="cb" style="left:171px;top:490.15px;border-color:#ebecef"></div>
<div class="a" style="left:226.6px;top:490.85px"><svg class="a" width="11" height="10" viewBox="0 0 11 10" overflow="visible"><path d="M4.4 9H0.5V0.5h7.7v4.2" stroke="#ababab" stroke-width="1" fill="none"/><path d="M2.3 2.9h4M2.3 4.7h2.3M2.6 6.6h0.9" stroke="#ababab" stroke-width="0.9"/><circle cx="7.3" cy="7.2" r="1.6" stroke="#ababab" stroke-width="1" fill="none"/><path d="M8.5 8.4L10 9.9" stroke="#ababab" stroke-width="1"/></svg></div><div class="a" style="left:248.6px;top:490.85px"><svg class="a" width="10" height="10" viewBox="0 0 10 10" overflow="visible"><path d="M5.6 0.5H0.5v8.6h8.3V5.2" stroke="#ababab" stroke-width="1" fill="none"/><path d="M3.7 6.1L9.7 -0.1" stroke="#ababab" stroke-width="1.2"/></svg></div><div class="a" style="left:269.5px;top:490.95px"><svg class="a" width="10" height="10" viewBox="0 0 10 10"><path d="M0.3 3h8.4" stroke="#ababab" stroke-width="1"/><path d="M2.6 1.2h3.6" stroke="#ababab" stroke-width="0.9"/><path d="M1.1 3.3v5.9h6.6V3.3" stroke="#ababab" stroke-width="1" fill="#ababab" fill-opacity="0.25"/><path d="M3.2 4.6v3.6M5.5 4.6v3.6" stroke="#ababab" stroke-width="0.8"/></svg></div>
<div class="t" style="left:326px;top:490.15px;color:#333;">素材<span class="L D">--</span><span class="L">x</span>月起对中小微企业实行阶段性<span class="L">xxx</span>服务<span class="L">xxx</span>内容</div>
<div class="a" style="left:562px;top:490.55px"><svg class="a" width="8" height="9" viewBox="0 0 8 9"><path d="M0.45 0.45h3v3.4h-3zM4.55 0.45h3v3.4h-3zM0.45 5.05h3v3.4h-3z" stroke="#8c8c8c" stroke-width="0.9" fill="none"/><path d="M1.4 1.5h1.1v1.3H1.4zM5.5 1.5h1.1v1.3H5.5zM1.4 6.1h1.1v1.3H1.4z" fill="#8c8c8c"/><path d="M4.3 4.8h1.5v1.5H4.3zM6.4 6h1.3v1.2H6.4zM4.6 7.3h1.1v1.4H4.6zM6.6 7.9h1v0.9h-1z" fill="#8c8c8c"/></svg></div><div class="a" style="left:578.8px;top:491.25px"><svg class="a" width="11" height="9" viewBox="0 0 11 9"><rect x="0.7" y="0.6" width="9.6" height="7.1" stroke="#9d9d9d" stroke-width="1" fill="none"/><path d="M0.7 7.8h9.6" stroke="#9d9d9d" stroke-width="0.8"/><path d="M1.2 3.6C2.6 6 3.9 5.6 5.2 4.4S7.8 2.2 9.8 3.4" stroke="#9d9d9d" stroke-width="0.9" fill="none"/><circle cx="2.7" cy="2.5" r="0.9" fill="#9d9d9d"/></svg></div><div class="t" style="left:872px;top:490.15px;color:#333;"><span class="L">2022</span><span class="L D">-</span><span class="L">09</span><span class="L D">-</span><span class="L">02</span> <span class="L">17:05</span></div>
<svg class="a" style="left:985px;top:492.25px" width="6.5" height="6" viewBox="0 0 6.5 6"><path d="M0.5 0.5L6 5.5M6 0.5L0.5 5.5" stroke="#c4375f" stroke-width="1"/></svg><div class="t" style="left:1051px;top:490.15px;color:#333;">默认</div>
<div class="a" style="left:70px;top:34px;width:1030px;height:4px;background:linear-gradient(#d9dadd,#dcdde0 65%,rgba(235,237,241,0))"></div>
</div></body></html>
